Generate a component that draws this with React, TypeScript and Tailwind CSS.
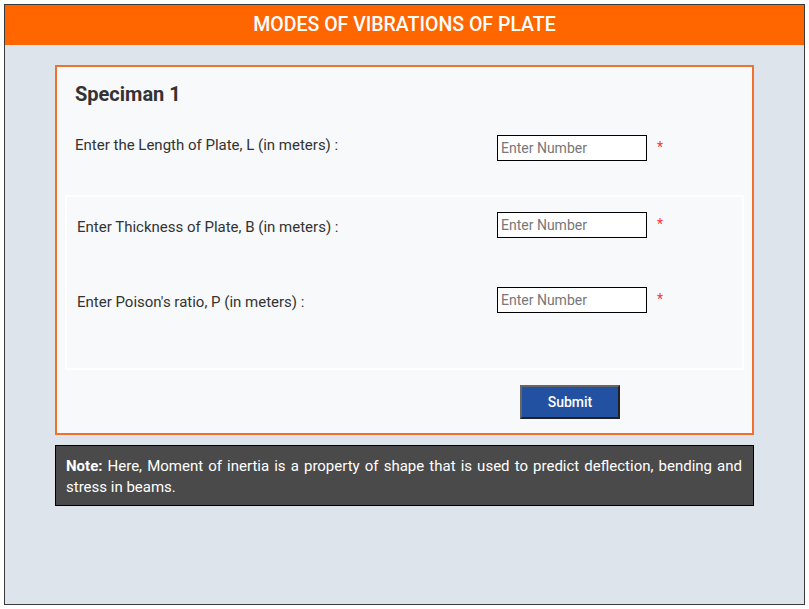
import React from "react";

const font = { fontFamily: "Roboto, 'Liberation Sans', sans-serif" };

function NumInput() {
  return (
    <input
      type="text"
      placeholder="Enter Number"
      className="w-[150px] h-[26px] border border-black bg-white px-[3px] text-[14px] text-[#333] placeholder:text-[#777] outline-none"
      style={font}
    />
  );
}

function Star() {
  return <span className="ml-[10px] mt-[2px] text-[14px] leading-5 text-[#ff3333]">*</span>;
}

export default function App() {
  return (
    <div className="p-[4px] bg-white" style={font}>
      <div className="w-[801px] h-[601px] border border-[#3a3a3a] bg-[#dde4eb]">
        <div className="h-[40px] bg-[#ff6600] flex items-center justify-center text-white text-[19.5px] font-medium">
          MODES OF VIBRATIONS OF PLATE
        </div>
        <div className="mx-[50px] mt-[20px]">
          <div className="border-2 border-[#f0702c] bg-[#f8f9fb]">
            <div className="px-[18px] pt-[15px]">
              <h2 className="text-[20px] leading-6 font-bold text-[#333]">Speciman 1</h2>
              <div className="mt-[29px] flex items-start">
                <span className="w-[422px] text-[15px] leading-5 text-[#333]">
                  Enter the Length of Plate, L (in meters) :
                </span>
                <NumInput />
                <Star />
              </div>
            </div>
            <div className="mx-[8px] mt-[34px] border-2 border-white pl-[10px] pt-[15px] pb-[55px]">
              <div className="flex items-start">
                <span className="w-[420px] mt-[5px] text-[15px] leading-5 text-[#333]">
                  Enter Thickness of Plate, B (in meters) :
                </span>
                <NumInput />
                <Star />
              </div>
              <div className="mt-[49px] flex items-start">
                <span className="w-[420px] mt-[5px] text-[15px] leading-5 text-[#333]">
                  Enter Poison's ratio, P (in meters) :
                </span>
                <NumInput />
                <Star />
              </div>
            </div>
            <div className="mt-[15px] mb-[14px] pl-[463px]">
              <button className="w-[100px] h-[34px] bg-[#2251a1] border-2 border-t-[#666] border-l-[#666] border-b-[#222] border-r-[#222] text-white text-[14px] font-medium">
                Submit
              </button>
            </div>
          </div>
          <div className="mt-[10px] border border-black bg-[#4a4a4a] pl-[10px] pr-[11px] pt-[10px] pb-[7px] text-white text-[15px] leading-[21px] text-justify">
            <b>Note:</b> Here, Moment of inertia is a property of shape that is used to predict deflection, bending and stress in beams.
          </div>
        </div>
      </div>
    </div>
  );
}
